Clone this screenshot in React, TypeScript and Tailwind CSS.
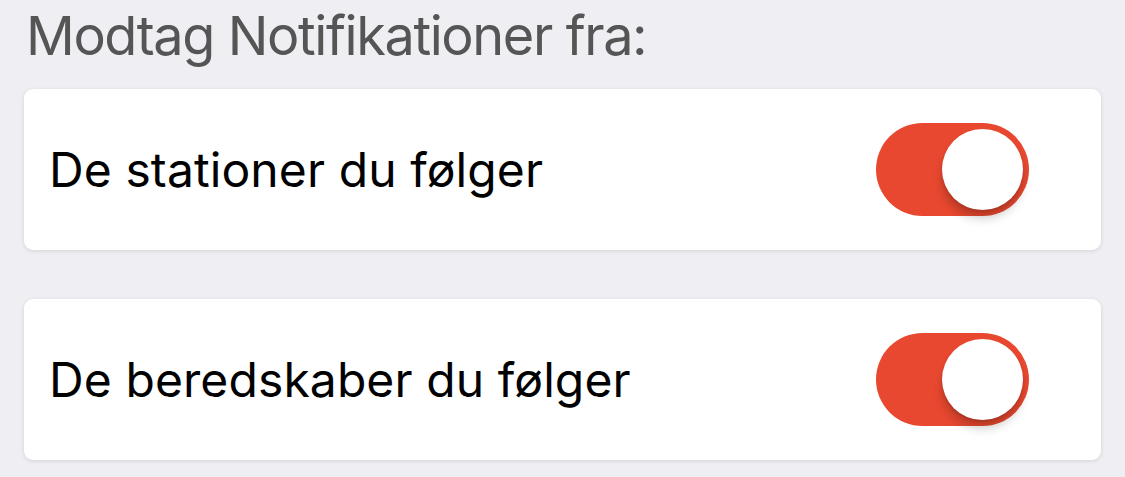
import React from "react";

function Toggle() {
  return (
    <div className="relative h-[93px] w-[153px] shrink-0 rounded-full bg-[#e8482f]">
      <div className="absolute left-[66px] top-[6px] h-[81px] w-[81px] rounded-full bg-white shadow-[0_9px_10px_rgba(0,0,0,0.18),0_2px_3px_rgba(0,0,0,0.12)]" />
    </div>
  );
}

function Row({ label }: { label: string }) {
  return (
    <div className="flex h-[161px] items-center justify-between rounded-[9px] bg-white pl-[25px] pr-[72px] shadow-[0_1px_4px_rgba(0,0,0,0.12)]">
      <span className="text-[48px] leading-none tracking-[0.1px] text-black">{label}</span>
      <Toggle />
    </div>
  );
}

export default function App() {
  return (
    <div
      className="h-[477px] w-[1125px] overflow-hidden bg-[#efeef3] px-[24px]"
      style={{ fontFamily: "Inter, 'Noto Sans', sans-serif" }}
    >
      <div className="pl-[2px] pt-[4px] text-[54px] leading-[64px] tracking-[-1.4px] text-[#555555]">
        Modtag Notifikationer fra:
      </div>
      <div className="mt-[21px] flex flex-col gap-[49px]">
        <Row label="De stationer du følger" />
        <Row label="De beredskaber du følger" />
      </div>
    </div>
  );
}
